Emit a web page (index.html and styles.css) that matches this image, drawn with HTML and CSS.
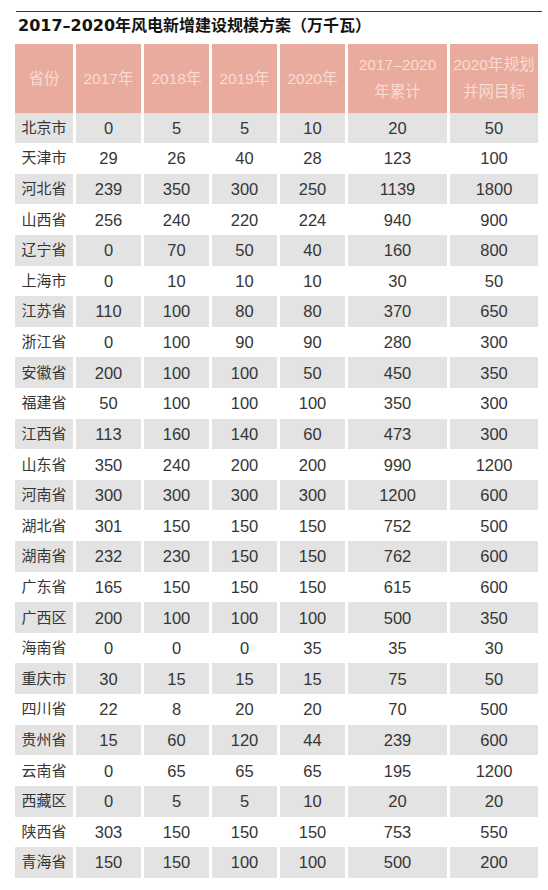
FILE: index.html
```html
<!DOCTYPE html>
<html lang="zh-CN">
<head>
<meta charset="utf-8">
<title>2017–2020年风电新增建设规模方案</title>
<link rel="stylesheet" href="styles.css">
</head>
<body>
<div class="sheet">
  <div class="rule"></div>
  <h1 class="title">2017–2020年风电新增建设规模方案（万千瓦）</h1>
  <div class="table">
    <div class="row head">
      <div class="cell">省份</div>
      <div class="cell">2017年</div>
      <div class="cell">2018年</div>
      <div class="cell">2019年</div>
      <div class="cell">2020年</div>
      <div class="cell">2017–2020<br>年累计</div>
      <div class="cell">2020年规划<br>并网目标</div>
    </div>
    <div class="row alt"><div class="cell">北京市</div><div class="cell">0</div><div class="cell">5</div><div class="cell">5</div><div class="cell">10</div><div class="cell">20</div><div class="cell">50</div></div>
    <div class="row"><div class="cell">天津市</div><div class="cell">29</div><div class="cell">26</div><div class="cell">40</div><div class="cell">28</div><div class="cell">123</div><div class="cell">100</div></div>
    <div class="row alt"><div class="cell">河北省</div><div class="cell">239</div><div class="cell">350</div><div class="cell">300</div><div class="cell">250</div><div class="cell">1139</div><div class="cell">1800</div></div>
    <div class="row"><div class="cell">山西省</div><div class="cell">256</div><div class="cell">240</div><div class="cell">220</div><div class="cell">224</div><div class="cell">940</div><div class="cell">900</div></div>
    <div class="row alt"><div class="cell">辽宁省</div><div class="cell">0</div><div class="cell">70</div><div class="cell">50</div><div class="cell">40</div><div class="cell">160</div><div class="cell">800</div></div>
    <div class="row"><div class="cell">上海市</div><div class="cell">0</div><div class="cell">10</div><div class="cell">10</div><div class="cell">10</div><div class="cell">30</div><div class="cell">50</div></div>
    <div class="row alt"><div class="cell">江苏省</div><div class="cell">110</div><div class="cell">100</div><div class="cell">80</div><div class="cell">80</div><div class="cell">370</div><div class="cell">650</div></div>
    <div class="row"><div class="cell">浙江省</div><div class="cell">0</div><div class="cell">100</div><div class="cell">90</div><div class="cell">90</div><div class="cell">280</div><div class="cell">300</div></div>
    <div class="row alt"><div class="cell">安徽省</div><div class="cell">200</div><div class="cell">100</div><div class="cell">100</div><div class="cell">50</div><div class="cell">450</div><div class="cell">350</div></div>
    <div class="row"><div class="cell">福建省</div><div class="cell">50</div><div class="cell">100</div><div class="cell">100</div><div class="cell">100</div><div class="cell">350</div><div class="cell">300</div></div>
    <div class="row alt"><div class="cell">江西省</div><div class="cell">113</div><div class="cell">160</div><div class="cell">140</div><div class="cell">60</div><div class="cell">473</div><div class="cell">300</div></div>
    <div class="row"><div class="cell">山东省</div><div class="cell">350</div><div class="cell">240</div><div class="cell">200</div><div class="cell">200</div><div class="cell">990</div><div class="cell">1200</div></div>
    <div class="row alt"><div class="cell">河南省</div><div class="cell">300</div><div class="cell">300</div><div class="cell">300</div><div class="cell">300</div><div class="cell">1200</div><div class="cell">600</div></div>
    <div class="row"><div class="cell">湖北省</div><div class="cell">301</div><div class="cell">150</div><div class="cell">150</div><div class="cell">150</div><div class="cell">752</div><div class="cell">500</div></div>
    <div class="row alt"><div class="cell">湖南省</div><div class="cell">232</div><div class="cell">230</div><div class="cell">150</div><div class="cell">150</div><div class="cell">762</div><div class="cell">600</div></div>
    <div class="row"><div class="cell">广东省</div><div class="cell">165</div><div class="cell">150</div><div class="cell">150</div><div class="cell">150</div><div class="cell">615</div><div class="cell">600</div></div>
    <div class="row alt"><div class="cell">广西区</div><div class="cell">200</div><div class="cell">100</div><div class="cell">100</div><div class="cell">100</div><div class="cell">500</div><div class="cell">350</div></div>
    <div class="row"><div class="cell">海南省</div><div class="cell">0</div><div class="cell">0</div><div class="cell">0</div><div class="cell">35</div><div class="cell">35</div><div class="cell">30</div></div>
    <div class="row alt"><div class="cell">重庆市</div><div class="cell">30</div><div class="cell">15</div><div class="cell">15</div><div class="cell">15</div><div class="cell">75</div><div class="cell">50</div></div>
    <div class="row"><div class="cell">四川省</div><div class="cell">22</div><div class="cell">8</div><div class="cell">20</div><div class="cell">20</div><div class="cell">70</div><div class="cell">500</div></div>
    <div class="row alt"><div class="cell">贵州省</div><div class="cell">15</div><div class="cell">60</div><div class="cell">120</div><div class="cell">44</div><div class="cell">239</div><div class="cell">600</div></div>
    <div class="row"><div class="cell">云南省</div><div class="cell">0</div><div class="cell">65</div><div class="cell">65</div><div class="cell">65</div><div class="cell">195</div><div class="cell">1200</div></div>
    <div class="row alt"><div class="cell">西藏区</div><div class="cell">0</div><div class="cell">5</div><div class="cell">5</div><div class="cell">10</div><div class="cell">20</div><div class="cell">20</div></div>
    <div class="row"><div class="cell">陕西省</div><div class="cell">303</div><div class="cell">150</div><div class="cell">150</div><div class="cell">150</div><div class="cell">753</div><div class="cell">550</div></div>
    <div class="row alt"><div class="cell">青海省</div><div class="cell">150</div><div class="cell">150</div><div class="cell">100</div><div class="cell">100</div><div class="cell">500</div><div class="cell">200</div></div>
  </div>
</div>
</body>
</html>
```
FILE: styles.css
```css
html, body {
  margin: 0;
  padding: 0;
  background: #ffffff;
}
body {
  font-family: "Liberation Sans", "Noto Sans CJK SC", sans-serif;
  color: #333333;
}
.sheet {
  padding-top: 11px;
  width: 548px;
}
.rule {
  margin-left: 16px;
  width: 526px;
  border-top: 1px solid #3a3a3a;
}
.title {
  margin: 3px 0 0 18px;
  height: 22px;
  line-height: 22px;
  font-family: "DejaVu Sans", "Noto Sans CJK SC", sans-serif;
  font-size: 16px;
  font-weight: bold;
  color: #141414;
  white-space: nowrap;
}
.table {
  margin: 7px 0 0 15px;
  width: 523px;
}
.row {
  display: grid;
  grid-template-columns: 58px 65px 65px 65px 65px 99px 88px;
  column-gap: 3px;
  height: 30.62px;
}
.cell {
  display: flex;
  align-items: center;
  justify-content: center;
  text-align: center;
  font-size: 16.5px;
  line-height: 20px;
  color: #363636;
  white-space: nowrap;
}
.row .cell:first-child {
  font-size: 15px;
}
.row.alt .cell {
  background: #e3e3e3;
}
.row.head {
  height: 68.5px;
}
.row.head .cell {
  background: #e8ab9d;
  color: #f8dcd3;
  line-height: 27px;
  font-size: 15.5px;
}
```
